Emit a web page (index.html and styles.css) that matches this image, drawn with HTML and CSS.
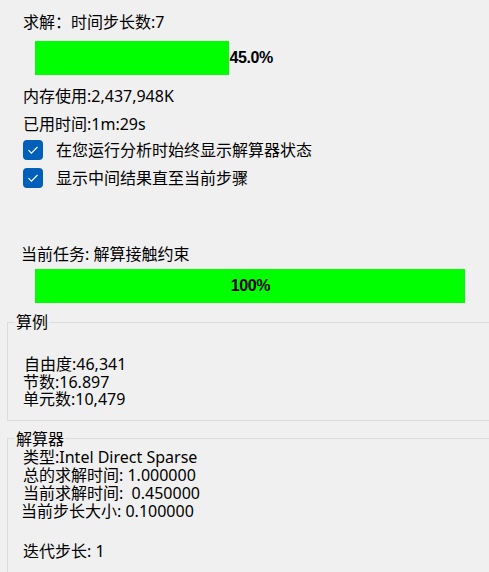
FILE: index.html
```html
<!DOCTYPE html>
<html>
<head>
<meta charset="utf-8">
<link rel="stylesheet" href="styles.css">
</head>
<body>
<div class="panel">
  <div class="row r1">求解：时间步长数:7</div>
  <div class="progress p1">
    <div class="fill" style="width:45%"></div>
    <span class="pct">45.0%</span>
  </div>
  <div class="row r-mem">内存使用:2,437,948K</div>
  <div class="row r-time">已用时间:1m:29s</div>
  <label class="check c1">
    <span class="box"><svg width="20" height="20" viewBox="0 0 20 20"><path d="M5.5 10.2 L8.4 13.1 L14.5 7" fill="none" stroke="#fff" stroke-width="1.1"/></svg></span>
    <span class="ctext">在您运行分析时始终显示解算器状态</span>
  </label>
  <label class="check c2">
    <span class="box"><svg width="20" height="20" viewBox="0 0 20 20"><path d="M5.5 10.2 L8.4 13.1 L14.5 7" fill="none" stroke="#fff" stroke-width="1.1"/></svg></span>
    <span class="ctext">显示中间结果直至当前步骤</span>
  </label>
  <div class="row r-task">当前任务: 解算接触约束</div>
  <div class="progress p2">
    <div class="fill full" style="width:100%"><span class="pct">100%</span></div>
  </div>
  <fieldset class="group g1">
    <legend>算例</legend>
    <div class="gbody b1">
      <div class="gl gl-a">自由度:46,341</div>
      <div class="gl">节数:16.897</div>
      <div class="gl">单元数:10,479</div>
    </div>
  </fieldset>
  <fieldset class="group g2">
    <legend>解算器</legend>
    <div class="gbody b2">
      <div class="sl">类型:Intel Direct Sparse</div>
      <div class="sl">总的求解时间: 1.000000</div>
      <div class="sl">当前求解时间:  0.450000</div>
      <div class="sl sl-step">当前步长大小: 0.100000</div>
      <div class="sl sl-iter">迭代步长: 1</div>
    </div>
  </fieldset>
</div>
</body>
</html>
```
FILE: styles.css
```css
html, body {
  margin: 0;
  padding: 0;
  background: #f0f0f0;
  overflow: hidden;
}
body {
  width: 489px;
  height: 572px;
  font-family: "Noto Sans", "Noto Sans CJK SC", sans-serif;
  font-size: 16px;
  color: #000;
}
.panel {
  display: flex;
  flex-direction: column;
  padding-top: 12px;
}
.row {
  line-height: 20px;
  height: 20px;
  padding-left: 23px;
  white-space: pre;
}
.progress {
  margin-left: 35px;
  width: 430px;
  height: 34px;
  display: flex;
  align-items: center;
}
.fill {
  height: 34px;
  background: #00ff00;
}
.full {
  display: flex;
  align-items: center;
  justify-content: center;
}
.pct {
  font-family: "Liberation Sans", sans-serif;
  font-weight: bold;
  font-size: 16px;
  letter-spacing: -0.4px;
  line-height: 20px;
  padding-left: 1px;
}
.p1 { margin-top: 9px; }
.r-mem { margin-top: 11px; }
.r-time { margin-top: 8px; }
.check {
  display: flex;
  align-items: center;
  height: 20px;
  padding-left: 23px;
}
.c1 { margin-top: 6px; }
.c2 { margin-top: 8px; }
.box {
  width: 20px;
  height: 20px;
  border-radius: 4px;
  background: #005fb8;
  display: flex;
}
.ctext {
  margin-left: 13px;
  line-height: 20px;
}
.r-task {
  margin-top: 56px;
  padding-left: 21px;
}
.p2 { margin-top: 5px; }
.group {
  margin: 10px -20px 0 7px;
  padding: 0;
  border: 1px solid #dcdcdc;
  min-width: 0;
}
.group legend {
  margin-left: 7px;
  padding: 0 1px;
  line-height: 18px;
}
.g2 { margin-top: 9px; }
.b1 {
  padding: 25px 0 11px 15px;
}
.gl {
  line-height: 17.5px;
  height: 17.5px;
}
.gl-a { padding-left: 1px; }
.b2 {
  padding: 0 0 20px 15px;
}
.sl {
  line-height: 18px;
  height: 18px;
  white-space: pre;
}
.sl-step { margin-left: -2px; }
.sl-iter { margin-top: 22px; }
```
